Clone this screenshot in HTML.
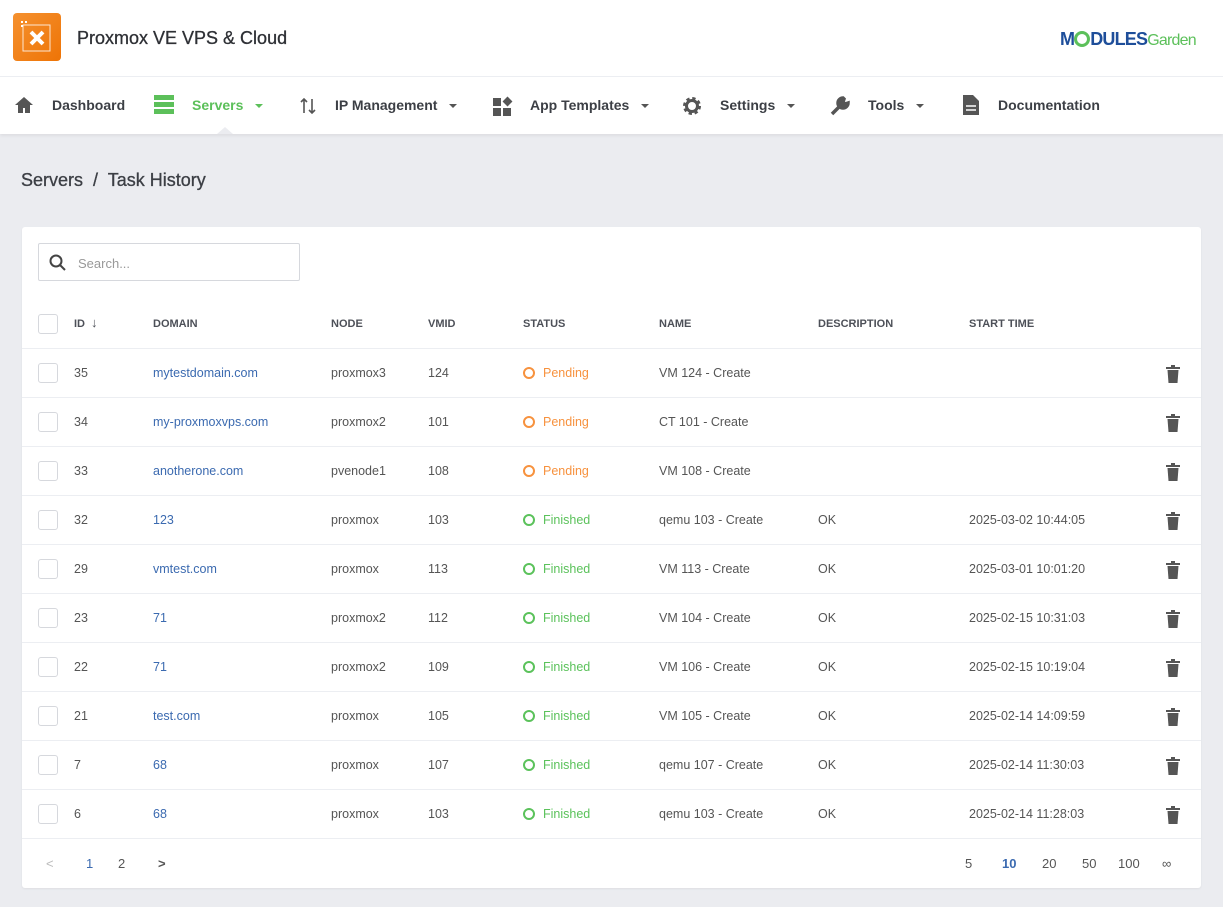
<!DOCTYPE html>
<html><head><style>
*{box-sizing:border-box;margin:0;padding:0}
body{width:1223px;height:907px;background:#ebecf0;font-family:"Liberation Sans",sans-serif;color:#444;position:relative;overflow:hidden}
.top{position:absolute;left:0;top:0;width:1223px;height:77px;background:#fff;border-bottom:1px solid #eceef2}
.logo{position:absolute;left:13px;top:13px;width:48px;height:48px;border-radius:4px;background:linear-gradient(135deg,#f5912f,#ee7406)}
.title{position:absolute;left:77px;top:28px;font-size:18px;color:#2e3035;-webkit-text-stroke:0.3px #2e3035}
.nav{position:absolute;left:0;top:77px;width:1223px;height:57px;background:#fff;box-shadow:0 2px 3px rgba(0,0,0,.06)}
.ni{position:absolute;top:20px;font-size:14px;font-weight:bold;color:#3c3f45}
.car{display:inline-block;width:0;height:0;border-left:4px solid transparent;border-right:4px solid transparent;border-top:4px solid #555;vertical-align:middle;margin-left:12px}
.bc{position:absolute;left:21px;top:170px;font-size:18px;color:#3c3f45;-webkit-text-stroke:0.3px #3c3f45}
.card{position:absolute;left:22px;top:227px;width:1179px;height:661px;background:#fff;border-radius:3px;box-shadow:0 1px 2px rgba(0,0,0,.06)}
.search{position:absolute;left:16px;top:16px;width:262px;height:38px;border:1px solid #d6d8dd;border-radius:2px;font-size:13px;color:#999;padding:12px 0 0 39px}
.row{position:absolute;left:0;width:1179px;height:49px;border-bottom:1px solid #eceef2;font-size:12.5px;color:#555}
.row span{position:absolute;top:17px}
.hd span{font-size:11px;font-weight:bold;color:#4d5058;top:18px}
.cb{position:absolute;left:16px;top:14px;width:20px;height:20px;border:1px solid #d6d8dd;border-radius:3px}
.a{color:#3b6ab0}
.p{color:#f7923e}.f{color:#5bc25b}
.dot{display:inline-block;width:12px;height:12px;border:2px solid;border-radius:50%;vertical-align:-2px;margin-right:8px}
.tr{position:absolute;left:1144px;top:16px}
.ft{position:absolute;top:629px;font-size:13px;color:#555}
</style></head><body>
<div class="top">
<div class="logo"><svg width="48" height="48"><rect x="10" y="12" width="27" height="26" fill="none" stroke="#fff" stroke-width="1" opacity=".8"/><path d="M18 19l12 12M30 19l-12 12" stroke="#fff" stroke-width="4"/><rect x="8" y="8" width="2" height="2" fill="#fff"/><rect x="12" y="8" width="2" height="2" fill="#fff"/><rect x="8" y="12" width="2" height="2" fill="#fff"/></svg></div>
<div class="title">Proxmox VE VPS &amp; Cloud</div>
<div style="position:absolute;left:1060px;top:29px;font-size:18px;font-weight:bold;color:#1e4e9a;letter-spacing:-0.8px">M<span style="display:inline-block;width:16px;height:16px;border:3px solid #5cc05a;border-radius:50%;vertical-align:-2px"></span>DULES<span style="font-weight:normal;color:#5cc05a;font-size:16px">Garden</span></div>
</div>
<div class="nav">
<svg style="position:absolute;left:14px;top:19px" width="20" height="18"><path d="M10 1L1 9h3v8h5v-5h2v5h5V9h3z" fill="#555"/></svg>
<div class="ni" style="left:52px">Dashboard</div>
<svg style="position:absolute;left:154px;top:18px" width="20" height="20"><rect y="0" width="20" height="5" fill="#5cc05a"/><rect y="7" width="20" height="5" fill="#5cc05a"/><rect y="14" width="20" height="5" fill="#5cc05a"/></svg>
<div class="ni" style="left:192px;color:#5cc05a">Servers<span class="car" style="border-top-color:#5cc05a"></span></div>
<div style="position:absolute;left:217px;top:50px;width:0;height:0;border-left:8px solid transparent;border-right:8px solid transparent;border-bottom:7px solid #ebecf0"></div>
<svg style="position:absolute;left:300px;top:20px" width="16" height="18"><path d="M4 16V2M1 5l3-3 3 3M12 2v14M9 13l3 3 3-3" stroke="#555" stroke-width="1.6" fill="none"/></svg>
<div class="ni" style="left:335px">IP Management<span class="car"></span></div>
<svg style="position:absolute;left:493px;top:19px" width="20" height="20"><rect x="0" y="2" width="8" height="8" fill="#555"/><rect x="0" y="12" width="8" height="8" fill="#555"/><rect x="10" y="12" width="8" height="8" fill="#555"/><rect x="11" y="2" width="7" height="7" fill="#555" transform="rotate(45 14.5 5.5)"/></svg>
<div class="ni" style="left:530px">App Templates<span class="car"></span></div>
<svg style="position:absolute;left:682px;top:19px" width="20" height="20"><circle cx="10" cy="10" r="7" fill="none" stroke="#555" stroke-width="4" stroke-dasharray="3 2.5"/><circle cx="10" cy="10" r="5.5" fill="none" stroke="#555" stroke-width="3"/></svg>
<div class="ni" style="left:720px">Settings<span class="car"></span></div>
<svg style="position:absolute;left:829px;top:18px" width="22" height="22"><path d="M3 19L12 10M14 3a5 5 0 1 0 5 5l-3 1-2-2 1-3z" stroke="#555" stroke-width="3.5" fill="#555"/></svg>
<div class="ni" style="left:868px">Tools<span class="car"></span></div>
<svg style="position:absolute;left:962px;top:18px" width="18" height="20"><path d="M1 0h10l6 6v14H1z" fill="#555"/><path d="M4 11h10M4 15h10" stroke="#fff" stroke-width="1.5"/></svg>
<div class="ni" style="left:998px">Documentation</div>
</div>
<div class="bc">Servers &nbsp;/&nbsp; Task History</div>
<div class="card">
<div class="search"><svg style="position:absolute;left:10px;top:10px" width="18" height="18"><circle cx="7" cy="7" r="5.5" fill="none" stroke="#444" stroke-width="2"/><path d="M11 11l5 5" stroke="#444" stroke-width="2"/></svg>Search...</div>
<div class="row hd" style="top:73px"><div class="cb"></div><span style="left:52px">ID</span><span style="left:69px;top:15px;font-weight:normal;font-size:13px">↓</span><span style="left:131px">DOMAIN</span><span style="left:309px">NODE</span><span style="left:406px">VMID</span><span style="left:501px">STATUS</span><span style="left:637px">NAME</span><span style="left:796px">DESCRIPTION</span><span style="left:947px">START TIME</span></div>
<div id="rows"></div>
<div class="ft" style="left:24px;color:#bbb">&lt;</div>
<div class="ft" style="left:64px;color:#3b6ab0">1</div>
<div class="ft" style="left:96px">2</div>
<div class="ft" style="left:136px;font-weight:bold">&gt;</div>
<div class="ft" style="left:943px">5</div>
<div class="ft" style="left:980px;color:#3b6ab0;font-weight:bold">10</div>
<div class="ft" style="left:1020px">20</div>
<div class="ft" style="left:1060px">50</div>
<div class="ft" style="left:1096px">100</div>
<div class="ft" style="left:1140px">∞</div>
</div>
<script>
var d=[["35","mytestdomain.com","proxmox3","124",0,"VM 124 - Create","",""],["34","my-proxmoxvps.com","proxmox2","101",0,"CT 101 - Create","",""],["33","anotherone.com","pvenode1","108",0,"VM 108 - Create","",""],["32","123","proxmox","103",1,"qemu 103 - Create","OK","2025-03-02 10:44:05"],["29","vmtest.com","proxmox","113",1,"VM 113 - Create","OK","2025-03-01 10:01:20"],["23","71","proxmox2","112",1,"VM 104 - Create","OK","2025-02-15 10:31:03"],["22","71","proxmox2","109",1,"VM 106 - Create","OK","2025-02-15 10:19:04"],["21","test.com","proxmox","105",1,"VM 105 - Create","OK","2025-02-14 14:09:59"],["7","68","proxmox","107",1,"qemu 107 - Create","OK","2025-02-14 11:30:03"],["6","68","proxmox","103",1,"qemu 103 - Create","OK","2025-02-14 11:28:03"]];
var h="";d.forEach(function(r,i){var s=r[4]?'<span class="f" style="left:501px"><i class="dot"></i>Finished</span>':'<span class="p" style="left:501px"><i class="dot"></i>Pending</span>';
h+='<div class="row" style="top:'+(122+i*49)+'px"><div class="cb"></div><span style="left:52px">'+r[0]+'</span><span class="a" style="left:131px">'+r[1]+'</span><span style="left:309px">'+r[2]+'</span><span style="left:406px">'+r[3]+'</span>'+s+'<span style="left:637px">'+r[5]+'</span><span style="left:796px">'+r[6]+'</span><span style="left:947px">'+r[7]+'</span><svg class="tr" width="14" height="18"><rect x="0" y="2" width="14" height="2" fill="#555"/><rect x="5" y="0" width="4" height="2" fill="#555"/><path d="M1.5 5h11l-1 13h-9z" fill="#555"/></svg></div>'});
document.getElementById("rows").innerHTML=h;
</script>
</body></html>
